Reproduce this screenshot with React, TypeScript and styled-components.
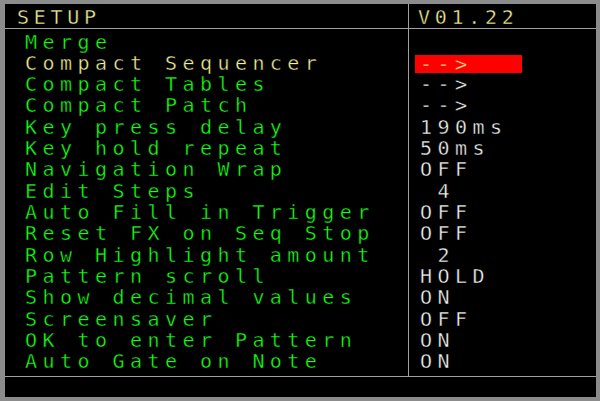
import styled, { createGlobalStyle } from "styled-components";

const GlobalStyle = createGlobalStyle`
  html, body {
    margin: 0;
    padding: 0;
    background: #8c8c8c;
  }
`;

const settings = [
  { label: "Merge", value: "" },
  { label: "Compact Sequencer", value: "-->", selected: true },
  { label: "Compact Tables", value: "-->" },
  { label: "Compact Patch", value: "-->" },
  { label: "Key press delay", value: "190ms" },
  { label: "Key hold repeat", value: "50ms" },
  { label: "Navigation Wrap", value: "OFF" },
  { label: "Edit Steps", value: " 4" },
  { label: "Auto Fill in Trigger", value: "OFF" },
  { label: "Reset FX on Seq Stop", value: "OFF" },
  { label: "Row Highlight amount", value: " 2" },
  { label: "Pattern scroll", value: "HOLD" },
  { label: "Show decimal values", value: "ON" },
  { label: "Screensaver", value: "OFF" },
  { label: "OK to enter Pattern", value: "ON" },
  { label: "Auto Gate on Note", value: "ON" },
];

const Screen = styled.div`
  width: 600px;
  height: 401px;
  box-sizing: border-box;
  background: #000;
  border-style: solid;
  border-color: #8c8c8c;
  border-width: 4px 4px 4px 5px;
  display: flex;
  flex-direction: column;
  font-family: "DejaVu Sans Mono", "Liberation Mono", monospace;
  font-size: 20px;
  letter-spacing: 5.45px;
  white-space: pre;
  -webkit-text-stroke: 0.4px #000;
`;

const Columns = styled.div<{ $height: number }>`
  display: flex;
  height: ${(p) => p.$height}px;
  border-bottom: 1px solid #a0a0a0;
`;

const LeftCell = styled.div<{ $pad: string }>`
  width: 403px;
  box-sizing: border-box;
  padding: ${(p) => p.$pad};
`;

const RightCell = styled.div<{ $pad: string }>`
  flex: 1;
  border-left: 1px solid #a0a0a0;
  padding: ${(p) => p.$pad};
`;

const Title = styled.div`
  color: #f0f096;
  line-height: 22px;
  letter-spacing: 4.7px;
`;

const Row = styled.div<{ $color: string }>`
  height: 21.33px;
  line-height: 21.33px;
  color: ${(p) => p.$color};
`;

const Highlight = styled.span`
  display: inline-block;
  vertical-align: top;
  margin-top: 2px;
  margin-left: -5px;
  padding-left: 5px;
  width: 102px;
  height: 18px;
  line-height: 18px;
  background: #ff0000;
  color: #fae896;
  -webkit-text-stroke: 0.4px #ff0000;
`;

const Footer = styled.div`
  flex: 1;
`;

export default function App() {
  return (
    <>
      <GlobalStyle />
      <Screen>
        <Columns $height={24}>
          <LeftCell $pad="2px 0 0 12px">
            <Title>SETUP</Title>
          </LeftCell>
          <RightCell $pad="2px 0 0 9px">
            <Title>V01.22</Title>
          </RightCell>
        </Columns>
        <Columns $height={347}>
          <LeftCell $pad="2.5px 0 0 20px">
            {settings.map((s) => (
              <Row key={s.label} $color={s.selected ? "#f0f096" : "#14ff14"}>
                {s.label}
              </Row>
            ))}
          </LeftCell>
          <RightCell $pad="2.5px 0 0 11px">
            {settings.map((s) => (
              <Row key={s.label} $color="#f4f4f4">
                {s.selected ? <Highlight>{s.value}</Highlight> : s.value}
              </Row>
            ))}
          </RightCell>
        </Columns>
        <Footer />
      </Screen>
    </>
  );
}
